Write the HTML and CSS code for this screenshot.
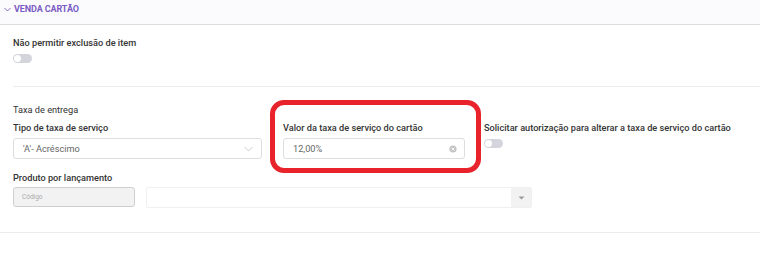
FILE: index.html
```html
<!DOCTYPE html>
<html lang="pt-BR">
<head>
  <meta charset="UTF-8">
  <title>Venda Cartão</title>
  <link rel="stylesheet" href="styles.css">
</head>
<body>
  <div class="panel">
    <div class="panel-header">
      <svg class="chevron" width="7" height="5" viewBox="0 0 7 5"><path d="M0.5 1 L3.5 4 L6.5 1" fill="none" stroke="#7b5cc4" stroke-width="0.9"/></svg>
      <span>VENDA CARTÃO</span>
    </div>

    <div class="section">
      <label class="label">Não permitir exclusão de item</label>
      <div class="toggle"></div>
    </div>

    <div class="section second">
      <div class="group-title">Taxa de entrega</div>
      <div class="row">
        <div class="field col-tipo">
          <label class="label">Tipo de taxa de serviço</label>
          <div class="select">
            <span>'A'- Acréscimo</span>
            <svg width="9" height="6" viewBox="0 0 9 6"><path d="M0.5 1 L4.5 5 L8.5 1" fill="none" stroke="#c8c8c8" stroke-width="0.9"/></svg>
          </div>
        </div>
        <div class="field col-valor">
          <div class="highlight"></div>
          <label class="label">Valor da taxa de serviço do cartão</label>
          <div class="input">
            <span>12,00%</span>
            <svg width="8" height="8" viewBox="0 0 8 8"><circle cx="4" cy="4" r="3.6" fill="#c4c4c4"/><path d="M2.6 2.6 L5.4 5.4 M5.4 2.6 L2.6 5.4" stroke="#fff" stroke-width="0.9"/></svg>
          </div>
        </div>
        <div class="field col-solicitar">
          <label class="label">Solicitar autorização para alterar a taxa de serviço do cartão</label>
          <div class="toggle small"></div>
        </div>
      </div>

      <div class="field produto">
        <label class="label">Produto por lançamento</label>
        <div class="row-produto">
          <div class="codigo">Código</div>
          <div class="combo">
            <div class="combo-text"></div>
            <div class="combo-btn">
              <svg width="7" height="4" viewBox="0 0 7 4"><path d="M0.5 0.5 L6.5 0.5 L3.5 3.5 Z" fill="#9a9a9a"/></svg>
            </div>
          </div>
        </div>
      </div>
    </div>
  </div>
</body>
</html>
```

FILE: styles.css
```css
* {
  margin: 0;
  padding: 0;
  box-sizing: border-box;
  font-family: Roboto, 'Liberation Sans', sans-serif;
}

body {
  background-color: #ffffff;
  width: 760px;
  height: 260px;
  overflow: hidden;
}

.panel-header {
  height: 25px;
  background-color: #fbfbfd;
  border-bottom: 1px solid #dcdce0;
  display: flex;
  align-items: center;
  gap: 3px;
  padding-left: 4px;
  padding-bottom: 7px;
}

.panel-header span {
  font-size: 9px;
  font-weight: 700;
  color: #7b5cc4;
  letter-spacing: -0.1px;
}

.chevron {
  margin-top: 1px;
}

.section {
  margin-left: 13px;
  padding-top: 12px;
  height: 62px;
  border-bottom: 1px solid #ededed;
}

.section.second {
  margin-left: 0;
  padding-left: 13px;
  padding-top: 17px;
  height: 146px;
}

.label {
  display: block;
  font-size: 9.2px;
  font-weight: 500;
  color: #333333;
  line-height: 12px;
}

.group-title {
  font-size: 9.2px;
  color: #333333;
  line-height: 12px;
  margin-bottom: 6px;
}

.toggle {
  width: 19px;
  height: 9px;
  margin-top: 5px;
  border-radius: 5px;
  background-color: #d4d4dc;
  position: relative;
}

.toggle::after {
  content: '';
  position: absolute;
  left: 1px;
  top: 1px;
  width: 7px;
  height: 7px;
  border-radius: 50%;
  background-color: #ffffff;
}

.row {
  display: flex;
}

.field {
  position: relative;
}

.col-tipo {
  width: 249px;
}

.col-valor {
  width: 182px;
  margin-left: 21px;
}

.col-solicitar {
  margin-left: 19px;
}

.select,
.input {
  margin-top: 4px;
  height: 21px;
  border: 1px solid #dddddd;
  border-radius: 3px;
  display: flex;
  align-items: center;
  justify-content: space-between;
  padding: 0 8px 0 9px;
  font-size: 9.2px;
  color: #666666;
}

.input {
  padding-right: 7px;
}

.highlight {
  position: absolute;
  left: -13px;
  top: -22px;
  width: 211px;
  height: 73px;
  border: 5px solid #e8232b;
  border-radius: 14px;
}

.produto {
  margin-top: 13px;
}

.row-produto {
  display: flex;
  gap: 11px;
  margin-top: 3px;
}

.codigo {
  width: 122px;
  height: 20px;
  background-color: #f2f2f2;
  border: 1px solid #cfcfcf;
  border-radius: 3px;
  font-size: 6.5px;
  color: #aaaaaa;
  display: flex;
  align-items: center;
  padding-left: 8px;
}

.combo {
  width: 386px;
  height: 21px;
  display: flex;
  border: 1px solid #f0f0f0;
  border-radius: 2px;
}

.combo-text {
  flex: 1;
}

.combo-btn {
  width: 20px;
  background-color: #f2f2f2;
  display: flex;
  align-items: center;
  justify-content: center;
}
```
